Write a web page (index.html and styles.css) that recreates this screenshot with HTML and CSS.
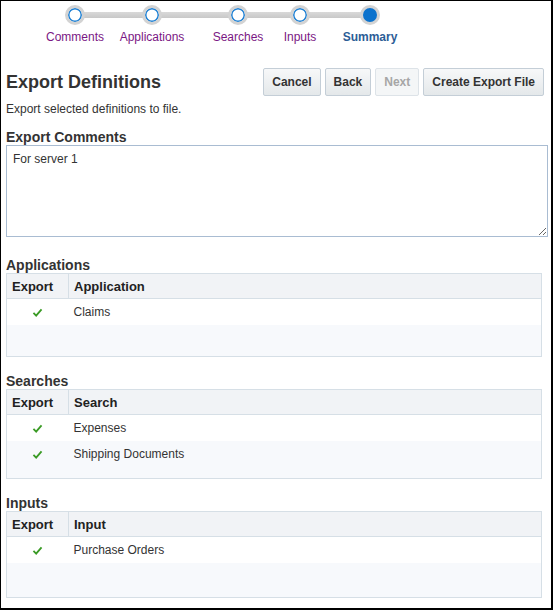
FILE: index.html
```html
<!DOCTYPE html>
<html lang="en">
<head>
  <meta charset="UTF-8" />
  <title>Export Definitions</title>
  <link rel="stylesheet" href="styles.css">
</head>
<body>
  <div class="frame">
    <ol class="train">
      <li class="stop visited"><span class="dot"></span><span class="label">Comments</span></li>
      <li class="stop visited"><span class="dot"></span><span class="label">Applications</span></li>
      <li class="stop visited"><span class="dot"></span><span class="label">Searches</span></li>
      <li class="stop visited"><span class="dot"></span><span class="label">Inputs</span></li>
      <li class="stop current"><span class="dot"></span><span class="label">Summary</span></li>
    </ol>

    <div class="page-head">
      <h1>Export Definitions</h1>
      <div class="buttons">
        <button>Cancel</button>
        <button>Back</button>
        <button disabled>Next</button>
        <button>Create Export File</button>
      </div>
    </div>
    <p class="desc">Export selected definitions to file.</p>

    <h2>Export Comments</h2>
    <textarea class="comments">For server 1</textarea>

    <h2 class="sec first">Applications</h2>
    <div class="grid grid-apps">
      <table>
        <thead><tr><th class="col-export">Export</th><th>Application</th></tr></thead>
        <tbody>
          <tr><td class="col-export"><svg class="check" viewBox="0 0 12 10"><path d="M1.5 5.5 L4.5 8.5 L10.5 1.5"/></svg></td><td>Claims</td></tr>
        </tbody>
      </table>
    </div>

    <h2 class="sec">Searches</h2>
    <div class="grid grid-searches">
      <table>
        <thead><tr><th class="col-export">Export</th><th>Search</th></tr></thead>
        <tbody>
          <tr><td class="col-export"><svg class="check" viewBox="0 0 12 10"><path d="M1.5 5.5 L4.5 8.5 L10.5 1.5"/></svg></td><td>Expenses</td></tr>
          <tr><td class="col-export"><svg class="check" viewBox="0 0 12 10"><path d="M1.5 5.5 L4.5 8.5 L10.5 1.5"/></svg></td><td>Shipping Documents</td></tr>
        </tbody>
      </table>
    </div>

    <h2 class="sec">Inputs</h2>
    <div class="grid grid-inputs">
      <table>
        <thead><tr><th class="col-export">Export</th><th>Input</th></tr></thead>
        <tbody>
          <tr><td class="col-export"><svg class="check" viewBox="0 0 12 10"><path d="M1.5 5.5 L4.5 8.5 L10.5 1.5"/></svg></td><td>Purchase Orders</td></tr>
        </tbody>
      </table>
    </div>
  </div>
</body>
</html>
```

FILE: styles.css
```css
body {
  margin: 0;
  font-family: 'Liberation Sans', Arial, sans-serif;
  color: #333;
  background: #fff;
}
.frame {
  box-sizing: border-box;
  width: 553px;
  height: 610px;
  border: 1px solid #000;
  border-right-width: 2px;
  border-bottom-width: 2px;
  padding: 0 5px 0 5px;
  overflow: hidden;
}

/* train */
.train {
  position: relative;
  list-style: none;
  margin: 0;
  padding: 4px 0 0 34px;
  display: grid;
  grid-template-columns: 70px 84px 88px 36px 104px;
  height: 40px;
}
.train::before {
  content: "";
  position: absolute;
  left: 69px;
  top: 11px;
  width: 295px;
  height: 6px;
  background: linear-gradient(#d9d9d9, #c8c8c8);
}
.stop {
  position: relative;
  display: flex;
  flex-direction: column;
  align-items: center;
}
.dot {
  box-sizing: border-box;
  width: 20px;
  height: 20px;
  border-radius: 50%;
  background: #fff;
  border: 3px solid #d3d3d3;
  box-shadow: inset 0 0 0 1.5px #1b7fd4;
}
.current .dot {
  background: #0b72cd;
  box-shadow: none;
}
.label {
  margin-top: 5px;
  font-size: 12px;
  white-space: nowrap;
  color: #7b1784;
}
.current .label {
  color: #2c5d96;
  font-weight: bold;
}

/* heading + buttons */
.page-head {
  display: flex;
  justify-content: space-between;
  align-items: center;
  margin-top: 23px;
}
h1 {
  margin: 0;
  font-size: 18px;
  font-weight: bold;
  color: #333;
}
.buttons {
  display: flex;
  gap: 4px;
  margin-right: 2px;
}
button {
  font-family: inherit;
  font-size: 12px;
  font-weight: bold;
  color: #333;
  height: 28px;
  padding: 0 8px;
  border: 1px solid #c4ced7;
  border-radius: 2px;
  background: linear-gradient(#f7f8f9, #e4e8ea);
}
button:disabled {
  color: #a6a6a6;
  background: #f4f6f7;
  border-color: #dde3e8;
}
.desc {
  margin: 6px 0 0;
  font-size: 12px;
  color: #333;
}
h2 {
  margin: 13px 0 0;
  font-size: 14px;
  font-weight: bold;
  color: #333;
  line-height: 16px;
}
.comments {
  display: block;
  box-sizing: border-box;
  width: 542px;
  height: 92px;
  margin-top: 0;
  padding: 6px 6px;
  border: 1px solid #a9bcd2;
  font-family: inherit;
  font-size: 12px;
  color: #333;
  resize: vertical;
}
.sec {
  margin-top: 16px;
}
.sec.first {
  margin-top: 20px;
}

/* tables */
.grid {
  box-sizing: border-box;
  width: 536px;
  border: 1px solid #d6dfe6;
  background: #f7f9fc;
}
.grid-apps { height: 84px; }
.grid-searches { height: 90px; }
.grid-inputs { height: 87px; }
table {
  width: 100%;
  border-collapse: collapse;
  font-size: 12px;
}
th {
  background: #f1f3f6;
  text-align: left;
  font-size: 13px;
  height: 24px;
  padding: 0 5px;
  border-bottom: 1px solid #d6dfe6;
  color: #222;
}
th.col-export {
  width: 51px;
  border-right: 1px solid #d6dfe6;
}
td {
  height: 26px;
  padding: 0 5px;
  color: #333;
}
td.col-export {
  text-align: center;
}
tbody tr:nth-child(odd) {
  background: #fff;
}
tbody tr:nth-child(even) {
  background: #f7f9fc;
}
.check {
  width: 11px;
  height: 9px;
  vertical-align: middle;
}
.check path {
  fill: none;
  stroke: #3a9b25;
  stroke-width: 2;
}
```
